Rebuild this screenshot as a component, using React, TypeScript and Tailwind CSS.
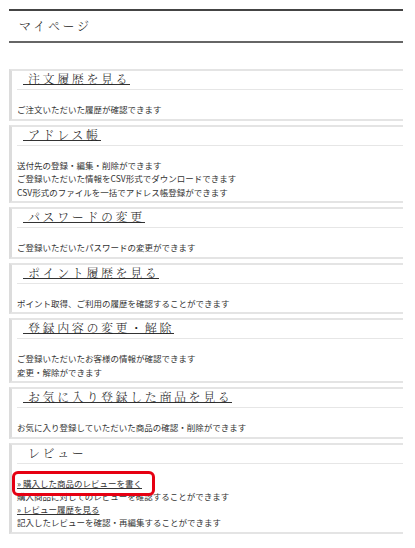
import React from "react";

const FONT = {
  fontFamily:
    '"Noto Serif CJK JP", "Noto Sans CJK JP", "Liberation Serif", serif',
};
const BODY = {
  fontFamily: '"Noto Sans CJK JP", "Liberation Sans", sans-serif',
};

type Section = { title: string; lines: string[] };

const sections: Section[] = [
  { title: "注文履歴を見る", lines: ["ご注文いただいた履歴が確認できます"] },
  {
    title: "アドレス帳",
    lines: [
      "送付先の登録・編集・削除ができます",
      "ご登録いただいた情報をCSV形式でダウンロードできます",
      "CSV形式のファイルを一括でアドレス帳登録ができます",
    ],
  },
  { title: "パスワードの変更", lines: ["ご登録いただいたパスワードの変更ができます"] },
  { title: "ポイント履歴を見る", lines: ["ポイント取得、ご利用の履歴を確認することができます"] },
  {
    title: "登録内容の変更・解除",
    lines: ["ご登録いただいたお客様の情報が確認できます", "変更・解除ができます"],
  },
  {
    title: "お気に入り登録した商品を見る",
    lines: ["お気に入り登録していただいた商品の確認・削除ができます"],
  },
];

function Heading({ title, underline = true }: { title: string; underline?: boolean }) {
  return (
    <div className="flex items-start ml-[5px] pl-[6px] pt-[3px] pb-[4px] border-b border-[#e6e6e6]">
      <span
        style={FONT}
        className={
          "block pl-[5px] text-[12px] leading-[10px] tracking-[2.6px] text-[#222] font-light " +
          (underline ? "border-b border-[#333]" : "border-b border-transparent")
        }
      >
        {title}
      </span>
    </div>
  );
}

function Box({ children }: { children: React.ReactNode }) {
  return (
    <div className="mb-[4px] border-t-2 border-b-2 border-l-[3px] border-[#e4e4e4] border-l-[#dcdcdc]">
      {children}
    </div>
  );
}

export default function App() {
  return (
    <div className="w-[415px] h-[548px] bg-white overflow-hidden pt-[9px] pl-[9px]" style={BODY}>
      <div className="w-[394px]">
        <div className="border-t-2 border-[#444] border-b-2 border-b-[#666]">
          <div
            style={FONT}
            className="h-[30px] leading-[30px] pl-[10px] text-[12px] tracking-[2.6px] text-[#222] font-light"
          >
            マイページ
          </div>
        </div>
        <div className="mt-[26px]">
          {sections.map((s) => (
            <Box key={s.title}>
              <Heading title={s.title} />
              <div className="pl-[5px] pt-[13px] pb-[2px] text-[8.5px] leading-[13.5px] text-[#333]">
                {s.lines.map((l) => (
                  <div key={l}>{l}</div>
                ))}
              </div>
            </Box>
          ))}
          <Box>
            <Heading title="レビュー" underline={false} />
            <div className="pl-[5px] pt-[13px] pb-[3px] text-[8.5px] leading-[13px] text-[#333]">
              <div className="relative">
                <a href="#" className="underline text-[#333]">
                  » 購入した商品のレビューを書く
                </a>
                <span className="absolute left-[-5px] top-[-6px] w-[143px] h-[25px] border-[3px] border-[#e60012] rounded-[6px] pointer-events-none" />
              </div>
              <div>購入商品に対してのレビューを確認することができます</div>
              <div>
                <a href="#" className="underline text-[#333]">
                  » レビュー履歴を見る
                </a>
              </div>
              <div>記入したレビューを確認・再編集することができます</div>
            </div>
          </Box>
        </div>
      </div>
    </div>
  );
}
